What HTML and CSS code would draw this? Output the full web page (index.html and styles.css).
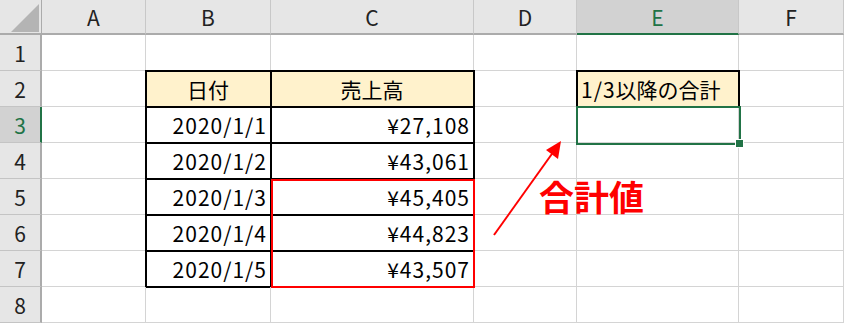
FILE: index.html
```html
<!DOCTYPE html>
<html lang="ja">
<head>
<meta charset="utf-8">
<link rel="stylesheet" href="styles.css">
</head>
<body>
<div class="sheet">
  <div class="grid">
    <div class="corner"><svg width="42" height="35" viewBox="0 0 42 35"><polygon points="11,32 39,32 39,4" fill="#b4b4b4"/></svg></div>
    <div class="ch">A</div>
    <div class="ch">B</div>
    <div class="ch">C</div>
    <div class="ch">D</div>
    <div class="ch sel">E</div>
    <div class="ch">F</div>

    <div class="rh">1</div>
    <div class="c"></div><div class="c"></div><div class="c"></div><div class="c"></div><div class="c"></div><div class="c"></div>

    <div class="rh">2</div>
    <div class="c"></div>
    <div class="c tb hd center">日付</div>
    <div class="c tb hd center">売上高</div>
    <div class="c"></div>
    <div class="c tb hd"><span class="num">1/3</span>以降の合計</div>
    <div class="c"></div>

    <div class="rh sel">3</div>
    <div class="c"></div>
    <div class="c tb right num">2020/1/1</div>
    <div class="c tb right num">¥27,108</div>
    <div class="c"></div><div class="c"></div><div class="c"></div>

    <div class="rh">4</div>
    <div class="c"></div>
    <div class="c tb right num">2020/1/2</div>
    <div class="c tb right num">¥43,061</div>
    <div class="c"></div><div class="c"></div><div class="c"></div>

    <div class="rh">5</div>
    <div class="c"></div>
    <div class="c tb right num">2020/1/3</div>
    <div class="c tb right num">¥45,405</div>
    <div class="c"></div><div class="c"></div><div class="c"></div>

    <div class="rh">6</div>
    <div class="c"></div>
    <div class="c tb right num">2020/1/4</div>
    <div class="c tb right num">¥44,823</div>
    <div class="c"></div><div class="c"></div><div class="c"></div>

    <div class="rh">7</div>
    <div class="c"></div>
    <div class="c tb right num">2020/1/5</div>
    <div class="c tb right num">¥43,507</div>
    <div class="c"></div><div class="c"></div><div class="c"></div>

    <div class="rh">8</div>
    <div class="c"></div><div class="c"></div><div class="c"></div><div class="c"></div><div class="c"></div><div class="c"></div>
  </div>

  <div class="redbox"></div>
  <div class="selection"><span class="handle"></span></div>
  <svg class="arrow" width="844" height="324" viewBox="0 0 844 324">
    <line x1="494" y1="235" x2="554" y2="151" stroke="#ff0000" stroke-width="2"/>
    <polygon points="561,141 558,159 546,150" fill="#ff0000"/>
  </svg>
  <div class="callout">合計値</div>
</div>
</body>
</html>
```

FILE: styles.css
```css
* { box-sizing: border-box; }
html, body { margin: 0; padding: 0; background: #fff; }
body {
  font-family: "Noto Sans CJK JP", "Noto Sans", sans-serif;
  color: #000;
  overflow: hidden;
}
.sheet { position: relative; width: 844px; height: 324px; }
.grid {
  display: grid;
  grid-template-columns: 42px 104px 125px 203px 103px 162px 105px;
  grid-template-rows: 35px repeat(8, 36px);
}
.corner {
  background: #e6e6e6;
  border-right: 1px solid #ababab;
  border-bottom: 2px solid #ababab;
}
.corner svg { display: block; }
.ch {
  background: #e6e6e6;
  border-right: 1px solid #c8c8c8;
  border-bottom: 2px solid #ababab;
  display: flex;
  align-items: center;
  justify-content: center;
  font-size: 21px;
  color: #222;
}
.ch.sel {
  background: #d2d2d2;
  color: #217346;
  border-bottom: 2px solid #217346;
}
.rh {
  background: #e6e6e6;
  border-right: 2px solid #ababab;
  border-bottom: 1px solid #c4c4c4;
  display: flex;
  align-items: center;
  justify-content: center;
  font-size: 21px;
  color: #222;
}
.rh.sel {
  background: #d2d2d2;
  color: #217346;
  border-right: 2px solid #217346;
}
.c {
  border-right: 1px solid #d4d4d4;
  border-bottom: 1px solid #d4d4d4;
  display: flex;
  align-items: center;
  padding: 0 4px;
  font-size: 21px;
  white-space: nowrap;
}
.num { letter-spacing: 1px; }
.right.num { padding-right: 3px; }
.tb {
  outline: 2px solid #000;
  outline-offset: -1px;
}
.hd { background: #fff2cc; }
.center { justify-content: center; }
.right { justify-content: flex-end; }
.redbox {
  position: absolute;
  left: 271px;
  top: 179px;
  width: 204px;
  height: 109px;
  border: 2px solid #ff0000;
}
.selection {
  position: absolute;
  left: 576px;
  top: 106px;
  width: 165px;
  height: 39px;
  border: 2px solid #217346;
}
.handle {
  position: absolute;
  right: -5px;
  bottom: -5px;
  width: 7px;
  height: 7px;
  background: #217346;
  border: 1px solid #fff;
  box-sizing: content-box;
}
.arrow { position: absolute; left: 0; top: 0; }
.callout {
  position: absolute;
  left: 539px;
  top: 175px;
  font-size: 35px;
  font-weight: 700;
  color: #ff0000;
  line-height: 1.2;
  white-space: nowrap;
}
```
